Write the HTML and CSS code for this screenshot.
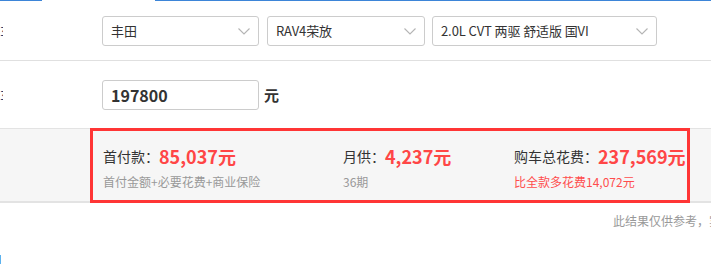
FILE: index.html
```
<!DOCTYPE html>
<html lang="zh-CN">
<head>
<meta charset="utf-8">
<title>购车计算</title>
<link rel="stylesheet" href="styles.css">
</head>
<body>
<div class="page">
  <div class="tabline">
    <span class="tab-seg tab-a"></span>
    <span class="tab-gap"></span>
    <span class="tab-seg tab-b"></span>
  </div>

  <div class="form-row row-car">
    <div class="label">车型</div>
    <div class="field select w1"><span>丰田</span><svg class="chev" viewBox="0 0 12 7" width="12" height="7"><polyline points="0.5,0.5 6,6 11.5,0.5" fill="none" stroke="#b4b4b4" stroke-width="1.1"/></svg></div>
    <div class="field select w2"><span>RAV4荣放</span><svg class="chev" viewBox="0 0 12 7" width="12" height="7"><polyline points="0.5,0.5 6,6 11.5,0.5" fill="none" stroke="#b4b4b4" stroke-width="1.1"/></svg></div>
    <div class="field select w3"><span>2.0L CVT 两驱 舒适版 国VI</span><svg class="chev" viewBox="0 0 12 7" width="12" height="7"><polyline points="0.5,0.5 6,6 11.5,0.5" fill="none" stroke="#b4b4b4" stroke-width="1.1"/></svg></div>
  </div>

  <div class="form-row row-price">
    <div class="label">车价</div>
    <div class="field input w1"><span>197800</span></div>
    <div class="unit">元</div>
  </div>

  <div class="result">
    <div class="result-box">
      <div class="col c1">
        <div class="main"><span class="k">首付款<span class="colon">：</span></span><span class="v">85,037元</span></div>
        <div class="sub">首付金额+必要花费+商业保险</div>
      </div>
      <div class="col c2">
        <div class="main"><span class="k">月供<span class="colon">：</span></span><span class="v">4,237元</span></div>
        <div class="sub">36期</div>
      </div>
      <div class="col c3">
        <div class="main"><span class="k">购车总花费<span class="colon">：</span></span><span class="v">237,569元</span></div>
        <div class="sub red">比全款多花费14,072元</div>
      </div>
    </div>
  </div>

  <div class="note">此结果仅供参考，实际应缴费以当地为准</div>

  <div class="bottom-bar"></div>
</div>
</body>
</html>
```
FILE: styles.css
```
html, body {
  margin: 0;
  padding: 0;
  overflow: hidden;
  background: #fff;
}
body {
  width: 711px;
  height: 264px;
  font-family: "Noto Sans CJK SC", "Open Sans", sans-serif;
  color: #333;
}
.page {
  width: 711px;
  overflow: hidden;
}
.tabline {
  display: flex;
  height: 1px;
}
.tab-seg {
  background: #3d85d8;
  height: 1px;
}
.tab-a { width: 42px; }
.tab-gap { width: 113px; }
.tab-b { flex: 1; }

.form-row {
  display: flex;
  align-items: center;
}
.row-car {
  height: 59px;
  border-bottom: 1px solid #e0e0e0;
}
.row-price {
  height: 67px;
}
.label {
  width: 3px;
  margin-right: 99px;
  overflow: hidden;
  display: flex;
  justify-content: flex-end;
  white-space: nowrap;
  font-size: 15px;
  color: #2b3f6c;
  direction: rtl;
}
.field {
  box-sizing: border-box;
  height: 30px;
  border: 1px solid #cccccc;
  border-radius: 3px;
  display: flex;
  align-items: center;
  justify-content: space-between;
  padding: 0 8px;
  background: #fff;
}
.select {
  font-size: 13px;
  letter-spacing: -0.1px;
  color: #333;
}
.w1 { width: 157px; }
.w2 { width: 158px; margin-left: 8px; }
.w3 { width: 225px; margin-left: 7px; }
.chev { display: block; margin-top: 1px; }
.input span {
  font-size: 16px;
  font-weight: bold;
  color: #333;
}
.unit {
  margin-left: 5px;
  font-size: 15px;
  font-weight: bold;
  color: #333;
}

.result {
  display: flex;
  background: #f6f6f6;
  border-top: 1px solid #e3e3e3;
  border-bottom: 2px solid #e3e3e3;
  height: 72px;
}
.result-box {
  box-sizing: border-box;
  margin: -1px 0 -2px 90px;
  width: 600px;
  height: 75px;
  border: 3px solid #ff3535;
  display: grid;
  grid-template-columns: 240px 171px 1fr;
  padding: 12px 0 0 10px;
}
.main {
  height: 26px;
  display: flex;
  align-items: center;
  white-space: nowrap;
}
.k {
  font-size: 14px;
  color: #333;
}
.colon {
  font-family: "Noto Sans CJK JP", "Noto Sans CJK SC", sans-serif;
}
.v {
  font-size: 18px;
  font-weight: bold;
  color: #ff4646;
}
.sub {
  margin-top: 3px;
  font-size: 12px;
  line-height: 20px;
  color: #999;
  white-space: nowrap;
}
.sub.red { color: #ff4d4d; }

.note {
  margin-top: 9px;
  padding-left: 613px;
  font-size: 12px;
  line-height: 18px;
  color: #999;
  white-space: nowrap;
  overflow: hidden;
}
.bottom-bar {
  margin-top: 25px;
  width: 1px;
  height: 20px;
  background: #5cb2ee;
}
```
